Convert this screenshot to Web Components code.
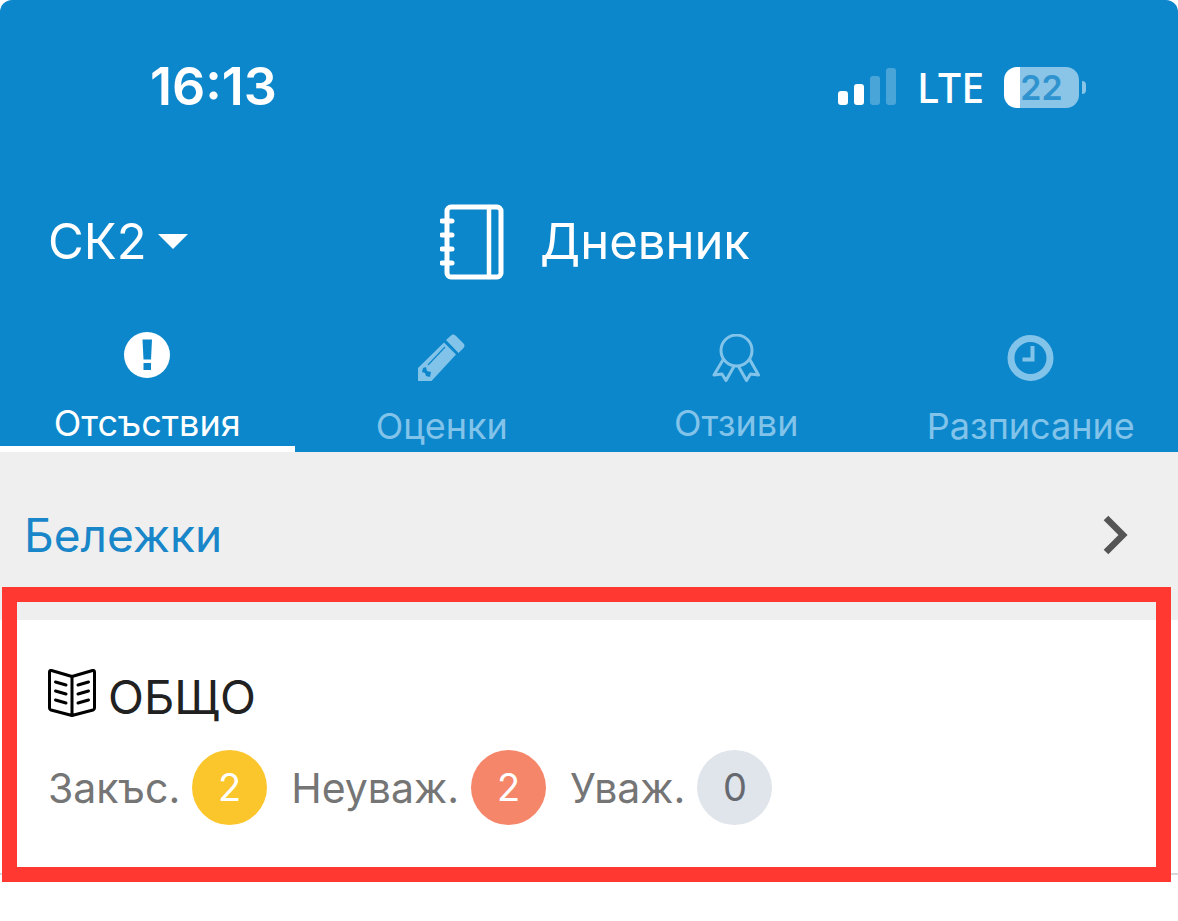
<!DOCTYPE html>
<html lang="bg">
<head>
<meta charset="utf-8">
<meta name="viewport" content="width=device-width, initial-scale=1">
<title>Дневник</title>
<style>
  body {
    min-height: 100vh;
    margin: 0;
    background: #fff;
    font-family: Inter, "Liberation Sans", sans-serif;
    --blue: #0d87cb;
    --faded: #82c3ea;
  }
</style>
</head>
<body>

<diary-header>
  <status-bar slot="status" time="16:13" network="LTE" battery="22"></status-bar>
  <diary-title slot="title" group="СК2">Дневник</diary-title>
  <diary-tabs slot="tabs">
    <diary-tab active>
      <svg slot="icon" width="46" height="54" viewBox="1 0 46 54" aria-hidden="true">
        <circle cx="24" cy="27" r="23" fill="#fff"/>
        <path d="M19.500 11.500h9.500l-1 20h-7.500zM20.500 35h7.500v7h-7.500z" fill="#0d87cb"/>
      </svg>
      Отсъствия
    </diary-tab>
    <diary-tab>
      <svg slot="icon" width="48" height="54" viewBox="0 0 48 54" aria-hidden="true">
        <path d="M0 50V37L26 11.500 38 23.500 13.500 50z" fill="currentColor"/>
        <path d="M28 9l5-4.500q2-2 4.500 0l8 8q2 2 0 4.500l-5 5z" fill="currentColor"/>
        <path d="M10 34L27 16" stroke="#0d87cb" stroke-width="1.200"/>
        <path d="M5 37l3-1 1 4 4 1-1 5-4-1-1-3-3-1z" fill="#0d87cb"/>
      </svg>
      Оценки
    </diary-tab>
    <diary-tab>
      <svg slot="icon" width="48" height="48" viewBox="0 0 48 48" fill="none" stroke="currentColor" stroke-width="3" stroke-linejoin="round" aria-hidden="true">
        <circle cx="24.500" cy="16.500" r="15.500"/>
        <path d="M11.500 25L2 41l8-1 4 6.500 8.500-15M37.500 25l9 16-8-1-4 6.500-8.500-15"/>
      </svg>
      Отзиви
    </diary-tab>
    <diary-tab>
      <svg slot="icon" width="48" height="54" viewBox="0 0 48 54" fill="none" stroke="currentColor" aria-hidden="true">
        <circle cx="23.500" cy="27" r="19.500" stroke-width="7"/>
        <path d="M25.500 15v13.500H15.500" stroke-width="4"/>
      </svg>
      Разписание
    </diary-tab>
  </diary-tabs>
</diary-header>

<main>
  <notes-row>Бележки</notes-row>
  <subject-card name="ОБЩО">
    <absence-count label="Закъс." kind="late">2</absence-count>
    <absence-count label="Неуваж." kind="unexcused">2</absence-count>
    <absence-count label="Уваж." kind="excused">0</absence-count>
  </subject-card>
</main>

<script>
  class DiaryHeader extends HTMLElement {
    constructor() {
      super();
      this.attachShadow({mode: 'open'}).innerHTML = `
        <style>
          :host {
            display: block;
            background: var(--blue);
            color: #fff;
            border-radius: 12px 12px 0 0;
          }
        </style>
        <header>
          <slot name="status"></slot>
          <slot name="title"></slot>
          <slot name="tabs"></slot>
        </header>
      `;
    }
  }

  class StatusBar extends HTMLElement {
    connectedCallback() {
      this.attachShadow({mode: 'open'}).innerHTML = `
        <style>
          :host {
            display: flex;
            justify-content: space-between;
            align-items: center;
            padding: 56px 92px 0 150px;
            line-height: 62px;
          }
          time {
            font-size: 52px;
            font-weight: 600;
          }
          .right {
            display: flex;
            align-items: center;
          }
          .network {
            margin: 0 20px;
            font-family: "Noto Sans", sans-serif;
            font-size: 41px;
            font-weight: 500;
          }
          .battery {
            display: flex;
            align-items: center;
            gap: 3px;
          }
          .level {
            width: 75px;
            line-height: 41px;
            border-radius: 13px;
            background: linear-gradient(to right, #fff 22%, #8ac4e6 22%);
            color: #2f93cf;
            font-size: 34px;
            font-weight: 600;
            text-align: center;
          }
          .tip {
            width: 4px;
            height: 13px;
            border-radius: 0 6px 6px 0;
            background: #8ac4e6;
          }
        </style>
        <time>${this.getAttribute('time')}</time>
        <div class="right">
          <svg width="59" height="38" viewBox="0 0 59 38" fill="#fff" aria-hidden="true">
            <rect x="0" y="23" width="10" height="14" rx="3"/>
            <rect x="16" y="16" width="10" height="21" rx="3"/>
            <rect x="32" y="8" width="10" height="29" rx="3" opacity=".25"/>
            <rect x="48" y="0" width="10" height="37" rx="3" opacity=".25"/>
          </svg>
          <span class="network">${this.getAttribute('network')}</span>
          <div class="battery">
            <div class="level">${this.getAttribute('battery')}</div>
            <div class="tip"></div>
          </div>
        </div>
      `;
    }
  }

  class DiaryTitle extends HTMLElement {
    connectedCallback() {
      this.attachShadow({mode: 'open'}).innerHTML = `
        <style>
          :host {
            display: grid;
            grid-template-columns: 1fr auto 1fr;
            align-items: center;
            padding: 86px 36px 47px 48px;
          }
          .group {
            display: flex;
            align-items: center;
            gap: 11px;
          }
          select {
            appearance: none;
            margin: 0;
            padding: 0;
            border: 0;
            background: none;
            color: inherit;
            font: inherit;
            font-size: 49px;
            line-height: 60px;
          }
          h1 {
            display: flex;
            align-items: center;
            gap: 36px;
            margin: 0;
            font-size: 49px;
            font-weight: 400;
            line-height: 60px;
          }
        </style>
        <div class="group">
          <select aria-label="Ученик"><option>${this.getAttribute('group')}</option></select>
          <svg width="30" height="16" viewBox="0 0 30 16" aria-hidden="true"><path d="M0 0h30L15 15z" fill="#fff"/></svg>
        </div>
        <h1>
          <svg width="64" height="76" viewBox="0 0 64 76" fill="none" stroke="#fff" stroke-width="5" stroke-linecap="round" aria-hidden="true">
            <rect x="7" y="3" width="54" height="70" rx="4"/>
            <path d="M49 3v70" stroke-width="4.500"/>
            <path d="M2 17h10M2 31h10M2 45h10M2 59h10"/>
          </svg>
          <slot></slot>
        </h1>
      `;
    }
  }

  class DiaryTabs extends HTMLElement {
    constructor() {
      super();
      this.attachShadow({mode: 'open'}).innerHTML = `
        <style>
          :host { display: block; }
          nav {
            display: grid;
            grid-template-columns: repeat(4, 1fr);
          }
        </style>
        <nav><slot></slot></nav>
      `;
    }
  }

  class DiaryTab extends HTMLElement {
    constructor() {
      super();
      this.attachShadow({mode: 'open'}).innerHTML = `
        <style>
          :host {
            display: grid;
            height: 125px;
            color: var(--faded);
          }
          button {
            display: flex;
            flex-direction: column;
            align-items: center;
            justify-content: center;
            gap: 19px;
            margin: 0;
            padding: 0;
            border: 0;
            background: none;
            color: inherit;
            font: inherit;
            font-size: 36px;
            line-height: 44px;
            white-space: nowrap;
          }
          :host([active]) { color: #fff; }
          :host([active]) button { border-bottom: 6px solid #fff; }
        </style>
        <button type="button">
          <slot name="icon"></slot>
          <span><slot></slot></span>
        </button>
      `;
    }
  }

  class NotesRow extends HTMLElement {
    constructor() {
      super();
      this.attachShadow({mode: 'open'}).innerHTML = `
        <style>
          :host {
            display: block;
            background: #efefef;
          }
          button {
            display: flex;
            align-items: center;
            justify-content: space-between;
            width: 100%;
            margin: 0;
            padding: 53px 50px 55px 24px;
            border: 0;
            background: none;
            color: #1886c9;
            font: inherit;
            font-size: 46px;
            line-height: 60px;
          }
        </style>
        <button type="button">
          <slot></slot>
          <svg width="25" height="40" viewBox="0 0 25 40" fill="none" aria-hidden="true">
            <path d="M3 3l17 17L3 37" stroke="#555" stroke-width="6.500"/>
          </svg>
        </button>
      `;
    }
  }

  class SubjectCard extends HTMLElement {
    connectedCallback() {
      this.attachShadow({mode: 'open'}).innerHTML = `
        <style>
          :host {
            display: block;
            position: relative;
            padding: 48px;
            border-bottom: 2px solid #d8d8d8;
            background: #fff;
          }
          h2 {
            display: flex;
            align-items: center;
            gap: 12px;
            margin: 0 0 24px;
            color: #212121;
            font-size: 47px;
            font-weight: 400;
            line-height: 58px;
          }
          h2 svg { margin-bottom: 8px; }
          .counts {
            display: flex;
            flex-wrap: wrap;
            gap: 24px;
          }
          /* marker drawn over the card and the row above it */
          .marker {
            position: absolute;
            inset: -33px 7px -9px 2px;
            border: 15px solid #ff3932;
            pointer-events: none;
          }
        </style>
        <h2>
          <svg width="48" height="48" viewBox="0 0 48 48" fill="none" stroke="#000" stroke-width="3" stroke-linecap="round" stroke-linejoin="round" aria-hidden="true">
            <path d="M24 7.500L3.500 1.500q-2-.5-2 1.500v36q0 1.500 1.500 2L24 46.500 45 41q1.500-.5 1.500-2V3q0-2-2-1.500zV46"/>
            <path d="M7.500 13l10.500 3M7.500 22l10.500 3M7.500 31l10.500 3M30 16l10.500-3M30 25l10.500-3M30 34l10.500-3"/>
          </svg>
          ${this.getAttribute('name')}
        </h2>
        <div class="counts"><slot></slot></div>
        <div class="marker"></div>
      `;
    }
  }

  class AbsenceCount extends HTMLElement {
    connectedCallback() {
      this.attachShadow({mode: 'open'}).innerHTML = `
        <style>
          :host {
            display: flex;
            align-items: center;
            gap: 12px;
            color: #757575;
            font-size: 41px;
          }
          .badge {
            width: 75px;
            border-radius: 50%;
            background: #fbc52c;
            color: #fff;
            font-size: 38px;
            line-height: 75px;
            text-align: center;
          }
          :host([kind=unexcused]) .badge { background: #f5866a; }
          :host([kind=excused]) .badge {
            background: #e0e4eb;
            color: #666a70;
          }
        </style>
        <span>${this.getAttribute('label')}</span>
        <span class="badge"><slot></slot></span>
      `;
    }
  }

  customElements.define('diary-header', DiaryHeader);
  customElements.define('status-bar', StatusBar);
  customElements.define('diary-title', DiaryTitle);
  customElements.define('diary-tabs', DiaryTabs);
  customElements.define('diary-tab', DiaryTab);
  customElements.define('notes-row', NotesRow);
  customElements.define('subject-card', SubjectCard);
  customElements.define('absence-count', AbsenceCount);
</script>
</body>
</html>
